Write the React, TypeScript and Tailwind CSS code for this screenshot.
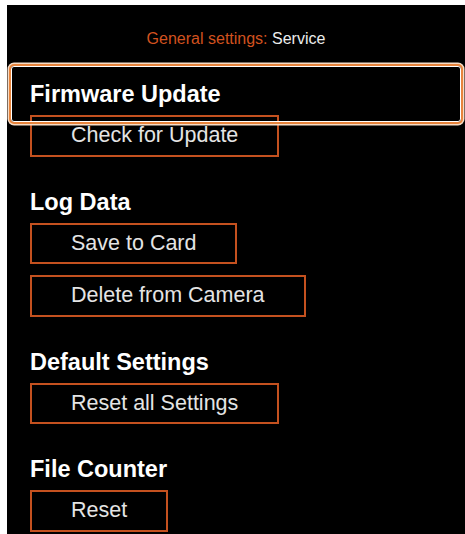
const sections = [
  { title: "Firmware Update", buttons: ["Check for Update"], focused: true },
  { title: "Log Data", buttons: ["Save to Card", "Delete from Camera"] },
  { title: "Default Settings", buttons: ["Reset all Settings"] },
  { title: "File Counter", buttons: ["Reset"] },
];

const MenuButton = ({ label }: { label: string }) => (
  <div className="self-start border-2 border-[#c4511f] px-[39px] text-[21.5px] leading-[37.5px] text-[#e4e4e4]">
    {label}
  </div>
);

export default function App() {
  return (
    <div className="min-h-screen w-[465px] bg-white pl-[7px] pt-[5px]" style={{ fontFamily: '"Liberation Sans", Arial, sans-serif' }}>
      <div className="h-[529px] w-[458px] overflow-hidden bg-black">
        {/* header */}
        <div className="pt-[24px] text-center text-[16px] leading-[20px]">
          <span className="text-[#d2521f]">General settings: </span>
          <span className="text-[#ececec]">Service</span>
        </div>

        <div className="flex flex-col">
          {sections.map((s) => (
            <div key={s.title} className="mt-[31px] flex flex-col">
              <div className="relative">
                {s.focused && (
                  <div className="absolute -top-[14px] -bottom-[14px] left-[4px] right-[4px] z-10 rounded-[3px] border-[1.5px] border-white shadow-[0_0_0_2px_#e8843c,0_0_0_3.5px_#f7dcc6]" />
                )}
                <div className="relative z-20 pl-[23px] text-[23.5px] font-bold leading-[28px] text-white">
                  {s.title}
                </div>
              </div>
              <div className="mt-[7px] flex flex-col gap-[11px] pl-[23px]">
                {s.buttons.map((b) => (
                  <MenuButton key={b} label={b} />
                ))}
              </div>
            </div>
          ))}
        </div>
      </div>
    </div>
  );
}
